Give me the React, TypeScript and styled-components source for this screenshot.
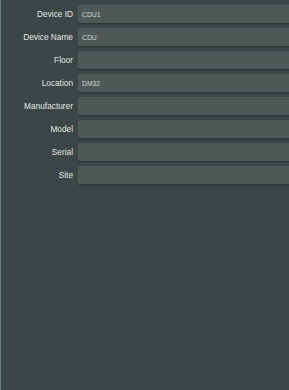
import React from "react";
import styled, { createGlobalStyle } from "styled-components";

const Global = createGlobalStyle`
  html, body { margin: 0; padding: 0; background: #3c4646; }
  body { width: 289px; height: 390px; overflow: hidden; }
`;

const Page = styled.div`
  width: 289px;
  height: 390px;
  box-sizing: border-box;
  background: #3c4646;
  border-left: 1px solid #5a8580;
  padding-top: 5px;
  overflow: hidden;
  font-family: "Liberation Sans", Arial, sans-serif;
`;

const Form = styled.div`
  display: flex;
  flex-direction: column;
  gap: 5px;
`;

const Row = styled.div`
  display: grid;
  grid-template-columns: 72px 1fr;
  column-gap: 5px;
  align-items: center;
  height: 18px;
`;

const Label = styled.label`
  text-align: right;
  font-size: 8.3px;
  color: #e2e6e6;
  white-space: nowrap;
`;

const Field = styled.div`
  height: 18px;
  width: 240px;
  box-sizing: border-box;
  background: #4e5958;
  border-radius: 2px;
  box-shadow: 0 1px 0 #2e3737, 0 2px 0 #343e3e;
  padding-left: 4px;
  display: flex;
  align-items: center;
  font-size: 6.8px;
  color: #d4d8d8;
`;

const fields: [string, string][] = [
  ["Device ID", "CDU1"],
  ["Device Name", "CDU"],
  ["Floor", ""],
  ["Location", "DM32"],
  ["Manufacturer", ""],
  ["Model", ""],
  ["Serial", ""],
  ["Site", ""],
];

export default function App() {
  return (
    <>
      <Global />
      <Page>
        <Form>
          {fields.map(([l, v]) => (
            <Row key={l}>
              <Label>{l}</Label>
              <Field>{v}</Field>
            </Row>
          ))}
        </Form>
      </Page>
    </>
  );
}
